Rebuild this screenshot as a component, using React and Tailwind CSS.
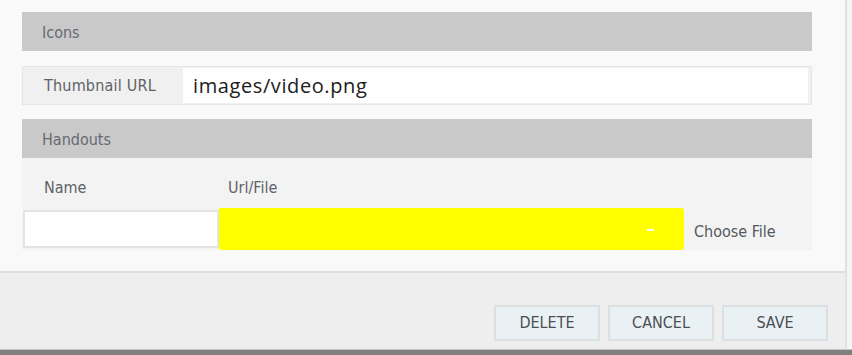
import React from "react";

const ui = { fontFamily: '"DejaVu Sans Condensed", "DejaVu Sans", sans-serif' };

export default function App() {
  return (
    <div className="w-[852px] h-[355px] overflow-hidden flex flex-col bg-[#f4f4f4]" style={ui}>
      <div className="flex flex-1 min-h-0">
        <div className="w-[847px] flex flex-col border-r-2 border-[#e2e2e2]">
          {/* content */}
          <div className="h-[273px] bg-[#f9f9f9] border-b-2 border-[#dedede] pt-3 pl-[22px] pr-[33px]">
            <div className="h-[39px] bg-[#c9c9c9] flex items-center pl-5 pt-[2px] text-[16px] text-[#666a70]">Icons</div>
            <div className="mt-[15px] h-[39px] bg-[#f0f0f0] border border-[#e6e6e6] flex items-center pl-[21px] pr-[3px]">
              <span className="w-[139px] text-[16px] tracking-[0.2px] text-[#5e6268]">Thumbnail URL</span>
              <div className="flex-1 h-[35px] bg-white flex items-center pl-[10px] text-[20px] tracking-[0.6px] text-[#202020]" style={{ fontFamily: '"Open Sans", Arial, sans-serif' }}>
                images/video.png
              </div>
            </div>
            <div className="mt-[14px] h-[39px] bg-[#c9c9c9] flex items-center pl-5 pt-[2px] text-[16px] text-[#666a70]">Handouts</div>
            <div className="h-[92px] bg-[#f3f3f3] flex flex-col">
              <div className="flex pt-[18px] h-[50px] text-[16px] text-[#5e6268]">
                <span className="w-[206px] pl-[22px]">Name</span>
                <span>Url/File</span>
              </div>
              <div className="flex items-center">
                <div className="w-[196px] h-[38px] ml-[1px] bg-white border-2 border-[#e4e4e4]"></div>
                <div className="relative w-[465px] h-[42px] mt-[1px] bg-[#ffff00] rounded-r-[3px] rounded-bl-[2px]">
                  <div className="absolute left-[428px] top-[21px] w-[7px] h-[2px] bg-white"></div>
                </div>
                <span className="ml-[10px] mt-[6px] text-[16px] text-[#55585d]">Choose File</span>
              </div>
            </div>
          </div>
          {/* footer */}
          <div className="flex-1 bg-[#eeeeee] flex justify-end items-start pt-[32px] pr-[17px] gap-2">
            {["DELETE", "CANCEL", "SAVE"].map((t) => (
              <button key={t} className="w-[106px] h-[36px] bg-[#eaf1f4] border-2 border-[#dcdfe0] text-[16px] text-[#4b4f54] flex items-center justify-center">
                {t}
              </button>
            ))}
          </div>
        </div>
      </div>
      <div className="h-[6px] bg-[#808080] border-t border-[#c4c4c4]"></div>
    </div>
  );
}
